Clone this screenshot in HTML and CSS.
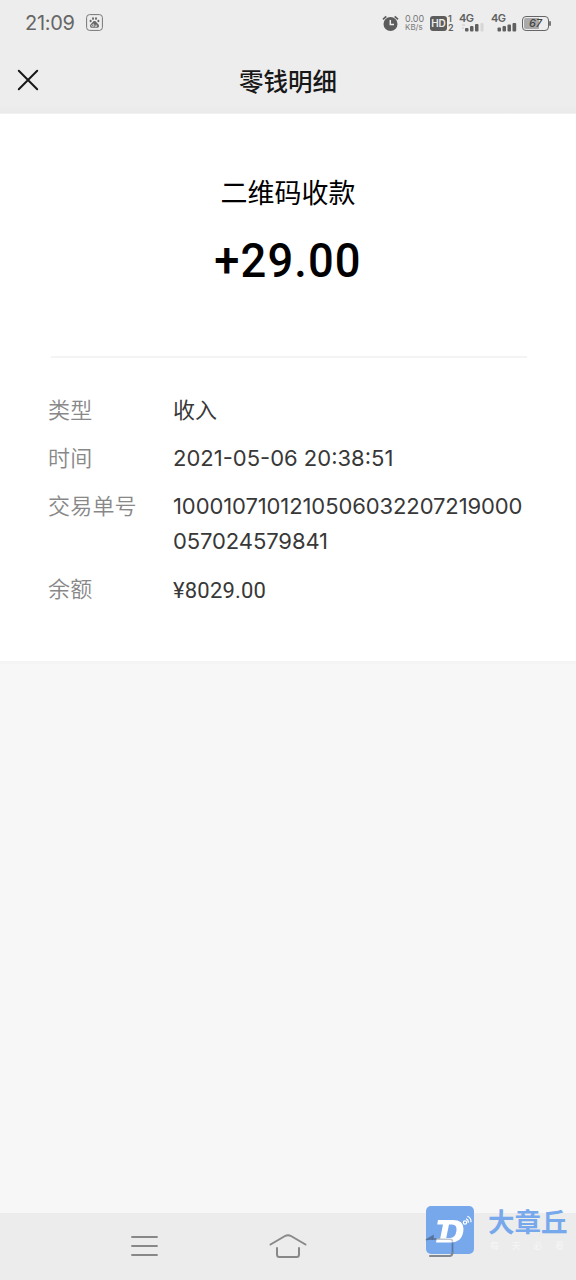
FILE: index.html
```html
<!DOCTYPE html>
<html lang="zh-CN">
<head>
<meta charset="utf-8">
<title>零钱明细</title>
<link rel="stylesheet" href="styles.css">
</head>
<body>
<div class="screen">
  <div class="status">
    <span class="clock">21:09</span>
    <svg class="paw" width="17" height="17" viewBox="0 0 17 17">
      <rect x=".6" y=".6" width="15.8" height="15.8" rx="3" fill="none" stroke="#777" stroke-width="1"/>
      <g fill="#666"><ellipse cx="4.600" cy="7" rx="1" ry="1.300"/><ellipse cx="7" cy="4.600" rx="1" ry="1.400"/><ellipse cx="10" cy="4.600" rx="1" ry="1.400"/><ellipse cx="12.400" cy="7" rx="1" ry="1.300"/><path d="M8.5 7C6.7 7 6.3 9 5 10c-1.8 1.6-.8 4 1.2 3.8h4.7c2 .2 3-2.2 1.1-3.8-1.3-1-1.700-3-3.500-3z"/></g>
      <path d="M7.400 9.600v3h-1a.8.8 0 0 1 0-1.800h1M9 10.700v1.900h1.700v-1.900" fill="none" stroke="#eee" stroke-width=".7"/>
    </svg>
    <div class="indicators">
      <svg class="alarm" width="17" height="17" viewBox="0 0 17 17">
        <circle cx="8.500" cy="9" r="7" fill="#5c5c5c"/>
        <path d="M1 4.400L4.300 1.300M16 4.400L12.700 1.300" stroke="#5c5c5c" stroke-width="1.700"/>
        <path d="M8.300 5v4.600h3.700" fill="none" stroke="#ededed" stroke-width="1.500"/>
      </svg>
      <div class="speed"><span>0.00</span><span>KB/s</span></div>
      <div class="hd">HD</div>
      <div class="sims"><span>1</span><span>2</span></div>
      <div class="signal signal-a">
        <span>4G</span>
        <svg width="25" height="10" viewBox="0 0 25 10"><path d="M3 3h3M3 6h2" stroke="#ccc"/><g fill="#606060"><rect x="6" y="6" width="3.500" height="3.500" rx="1"/><rect x="11" y="4" width="3.500" height="5.500" rx="1"/><rect x="16" y="2" width="3.500" height="7.500" rx="1"/></g><rect x="21.500" y="1" width="3" height="8.500" rx="1" fill="#d6d6d6"/></svg>
      </div>
      <div class="signal signal-b">
        <span>4G</span>
        <svg width="26" height="10" viewBox="0 0 26 10"><g fill="#606060"><rect x="6.500" y="5.500" width="3.500" height="4" rx="1"/><rect x="11.500" y="4" width="3.500" height="5.500" rx="1"/><rect x="16.500" y="2.500" width="3.500" height="7" rx="1"/><rect x="21.500" y="1" width="3.700" height="8.500" rx="1"/></g></svg>
      </div>
      <div class="battery"><span>67</span></div>
    </div>
  </div>
  <header class="header">
    <svg class="close" width="22" height="22" viewBox="0 0 22 22"><path d="M1.800 1.800L20.200 20.200M20.200 1.800L1.800 20.200" stroke="#181818" stroke-width="2" stroke-linecap="round"/></svg>
    <h1 class="title">零钱明细</h1>
  </header>
  <main class="card">
    <div class="subject">二维码收款</div>
    <div class="amount">+29.00</div>
    <hr class="divider">
    <dl class="details">
      <dt>类型</dt><dd>收入</dd>
      <dt>时间</dt><dd class="time">2021-05-06 20:38:51</dd>
      <dt>交易单号</dt><dd class="order">1000107101210506032207219000<br>057024579841</dd>
      <dt>余额</dt><dd class="balance">¥8029.00</dd>
    </dl>
  </main>
  <div class="blank"></div>
  <nav class="nav">
    <svg width="28" height="22" viewBox="0 0 28 22"><path d="M2 2h25M2 11h25M2 20h25" stroke="#888" stroke-width="1.800" stroke-linecap="round"/></svg>
    <svg width="38" height="26" viewBox="0 0 38 26"><path d="M1.500 11.500L16 3q3-1.700 6 0l14.500 8.500M8 15v6.500q0 2.500 2.500 2.500h17q2.500 0 2.500-2.500V15" fill="none" stroke="#888" stroke-width="2" stroke-linecap="round"/></svg>
    <span class="nav-slot"></span>
  </nav>
  <div class="brand">
    <svg width="50" height="52" viewBox="0 0 50 52">
      <rect x="1" width="48" height="48" rx="5" fill="#78a8ec"/>
      <path d="M1 34l7-4v3h17q2.500 0 2.500 2.500V48" fill="none" stroke="#536b91" stroke-opacity=".75" stroke-width="1.800"/>
      <path d="M1 34l7-4v4z" fill="#536b91" fill-opacity=".8"/>
      <path fill-rule="evenodd" fill="#fff" d="M13 14H28q10.500 0 10.500 9Q38 36.500 25 36.500H11l.8-4h3.400L18 18.500h-5.800zM24 18.500l-2.800 13.500H25q5.500 0 6.500-7.500.6-6-4.500-6z"/>
      <path d="M12 33.200h13q2.500 0 2.500 2.500" fill="none" stroke="#8d98aa" stroke-opacity=".55" stroke-width="1.500"/>
      <circle cx="40" cy="16.500" r="1.700" fill="none" stroke="#fff" stroke-width="1.200"/>
      <path d="M41 12.700q2.500.8 2.400 4M42.300 10.300q4 1.400 3.700 6" fill="none" stroke="#fff" stroke-width="1.200"/>
      <path d="M27.500 47q-.5 3-3 3H5" fill="none" stroke="#828890" stroke-width="2" stroke-linecap="round"/>
    </svg>
    <div class="brand-text"><div class="brand-name">大章丘</div><div class="brand-tag"><span>每</span><span>天</span><span>必</span><span>看</span></div></div>
  </div>
</div>
</body>
</html>
```
FILE: styles.css
```css
* { box-sizing: border-box; }
body { margin: 0; background: #f7f7f7; font-family: Inter, "Noto Sans CJK SC", sans-serif; }
.screen { position: relative; width: 576px; height: 1280px; display: flex; flex-direction: column; overflow: hidden; }

.status { height: 46px; background: #ededed; display: flex; align-items: center; padding: 0 27px 0 25px; color: #606060; }
.clock { font-size: 20px; line-height: 24px; width: 51px; letter-spacing: -.3px; color: #666; white-space: nowrap; }
.paw { margin-left: 10px; margin-bottom: 1px; }
.indicators { margin-left: auto; display: flex; align-items: center; }
.speed { margin-left: 6px; width: 21px; display: flex; flex-direction: column; font-size: 9px; line-height: 8px; color: #777; }
.speed span:last-child { font-size: 8px; }
.hd { margin-left: 4px; width: 17px; height: 15px; border-radius: 3px; background: #5c5c5c; color: #ededed; font-size: 10px; font-weight: 600; line-height: 15px; text-align: center; }
.sims { width: 7px; padding-left: 1px; display: flex; flex-direction: column; font-size: 9px; font-weight: 600; line-height: 9px; }
.signal { height: 18px; display: flex; flex-direction: column; font-size: 11px; font-weight: 600; line-height: 8px; letter-spacing: -.5px; }
.signal-a { margin-left: 5px; }
.signal-b { margin-left: 7px; }
.battery { position: relative; margin-left: 5px; width: 27px; height: 15px; border: 1.500px solid #666; border-radius: 4px; padding: 1px; background: linear-gradient(90deg, #aaa 0 67%, #ededed 67%) content-box; font-size: 11px; font-weight: 500; line-height: 11px; text-align: center; color: #444; font-style: italic; }
.battery::after { content: ""; position: absolute; right: -3px; top: 4px; width: 2px; height: 5px; background: #777; border-radius: 1px; }

.header { height: 68px; background: linear-gradient(#ededed 85%, #eaeaea 98%, #f6f6f6); display: grid; grid-template-columns: 60px 1fr 60px; align-items: center; }
.close { margin-left: 17px; margin-bottom: 1px; }
.title { margin: 0; font-family: "Noto Sans CJK SC", sans-serif; font-size: 24.500px; font-weight: 500; line-height: 36px; text-align: center; color: #181818; padding-top: 1px; }

.card { height: 547px; background: #fff; padding-top: 60px; display: flex; flex-direction: column; }
.subject { font-size: 27px; line-height: 40px; text-align: center; color: #000; }
.amount { margin-top: 17px; font-family: Roboto, sans-serif; font-size: 49px; font-weight: 500; line-height: 60px; letter-spacing: 1.200px; text-align: center; color: #000; transform: scaleX(.925); }
.divider { width: 476px; height: 2px; border: 0; margin: 65px 49px 0 51px; background: #f4f4f4; }
.details { margin: 35px 0 0; padding-left: 48px; display: grid; grid-template-columns: 125px 1fr; row-gap: 13px; font-size: 22px; line-height: 35px; }
.details dt { font-weight: 350; letter-spacing: .2px; color: #888; }
.details dd { margin: 0; color: #383838; white-space: nowrap; }
.details .order { letter-spacing: -.1px; }
.details .balance { font-family: Roboto, sans-serif; letter-spacing: .2px; padding-top: 1px; }

.blank { flex: 1; background: #f7f7f7; border-top: 3px solid #f4f4f4; }
.nav { height: 67px; background: #ececec; display: flex; align-items: center; justify-content: space-between; padding: 0 130px 1px; }
.nav-slot { width: 28px; }
.brand { position: absolute; left: 425px; top: 1206px; display: flex; }
.brand-text { margin-left: 13px; font-family: "Noto Sans CJK SC", sans-serif; white-space: nowrap; }
.brand-name { font-size: 26.500px; line-height: 29px; height: 33px; font-weight: 700; color: #78a8ec; }
.brand-tag { width: 76px; padding-left: 2px; display: flex; justify-content: space-between; font-size: 9px; line-height: 13px; color: #f6f6f6; }
```
